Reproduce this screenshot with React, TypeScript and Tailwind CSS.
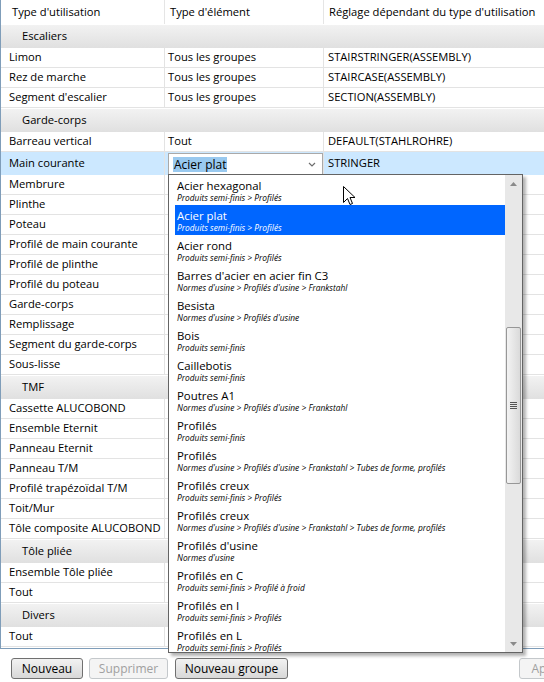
import React from "react";

type Row = { a: string; b?: string; c?: string; combo?: boolean };
type Group = { title: string; rows: Row[] };

const groups: Group[] = [
  {
    title: "Escaliers",
    rows: [
      { a: "Limon", b: "Tous les groupes", c: "STAIRSTRINGER(ASSEMBLY)" },
      { a: "Rez de marche", b: "Tous les groupes", c: "STAIRCASE(ASSEMBLY)" },
      { a: "Segment d'escalier", b: "Tous les groupes", c: "SECTION(ASSEMBLY)" },
    ],
  },
  {
    title: "Garde-corps",
    rows: [
      { a: "Barreau vertical", b: "Tout", c: "DEFAULT(STAHLROHRE)" },
      { a: "Main courante", b: "Acier plat", c: "STRINGER", combo: true },
      { a: "Membrure" },
      { a: "Plinthe" },
      { a: "Poteau" },
      { a: "Profilé de main courante" },
      { a: "Profilé de plinthe" },
      { a: "Profilé du poteau" },
      { a: "Garde-corps" },
      { a: "Remplissage" },
      { a: "Segment du garde-corps" },
      { a: "Sous-lisse" },
    ],
  },
  {
    title: "TMF",
    rows: [
      { a: "Cassette ALUCOBOND" },
      { a: "Ensemble Eternit" },
      { a: "Panneau Eternit" },
      { a: "Panneau T/M" },
      { a: "Profilé trapézoïdal T/M" },
      { a: "Toit/Mur" },
      { a: "Tôle composite ALUCOBOND" },
    ],
  },
  { title: "Tôle pliée", rows: [{ a: "Ensemble Tôle pliée" }, { a: "Tout" }] },
  { title: "Divers", rows: [{ a: "Tout" }] },
];

const SF = "Produits semi-finis > Profilés";
const items: [string, string][] = [
  ["Acier hexagonal", SF],
  ["Acier plat", SF],
  ["Acier rond", SF],
  ["Barres d'acier en acier fin C3", "Normes d'usine > Profilés d'usine > Frankstahl"],
  ["Besista", "Normes d'usine > Profilés d'usine"],
  ["Bois", "Produits semi-finis"],
  ["Caillebotis", "Produits semi-finis"],
  ["Poutres A1", "Normes d'usine > Profilés d'usine > Frankstahl"],
  ["Profilés", "Produits semi-finis"],
  ["Profilés", "Normes d'usine > Profilés d'usine > Frankstahl > Tubes de forme, profilés"],
  ["Profilés creux", SF],
  ["Profilés creux", "Normes d'usine > Profilés d'usine > Frankstahl > Tubes de forme, profilés"],
  ["Profilés d'usine", "Normes d'usine"],
  ["Profilés en C", "Produits semi-finis > Profilé à froid"],
  ["Profilés en I", SF],
  ["Profilés en L", SF],
];

function Button({ label, disabled, w }: { label: string; disabled?: boolean; w: string }) {
  return (
    <div
      className={
        "flex h-[21px] shrink-0 items-center justify-center overflow-hidden rounded-[3px] border text-[12px] " +
        w +
        (disabled
          ? " border-[#c4c8cb] bg-[#f4f4f4] text-[#a0a0a0]"
          : " border-[#707070] bg-gradient-to-b from-[#f2f2f2] to-[#d8d8d8] text-black")
      }
    >
      {label}
    </div>
  );
}

function Dropdown() {
  return (
    <div className="absolute left-[168px] top-[174px] flex h-[479px] w-[355px] border border-[#646464] bg-white shadow-[3px_3px_3px_rgba(0,0,0,0.3)]">
      <div className="flex-1 overflow-hidden">
        {items.map(([t, s], i) => {
          const sel = i === 1;
          return (
            <div
              key={i}
              className={
                "ml-[6px] flex h-[30px] flex-col pl-[2px] leading-none " +
                (sel ? "bg-[#0066ff] text-white" : "text-black")
              }
            >
              <span className="mt-[3px] text-[11.4px] leading-[15px]">{t}</span>
              <span className="text-[8.4px] italic leading-[10px]">{s}</span>
            </div>
          );
        })}
      </div>
      {/* scrollbar */}
      <div className="flex w-[17px] flex-col bg-[#e8e8e8]">
        <div className="flex h-[17px] items-center justify-center">
          <svg width="7" height="4" viewBox="0 0 7 4">
            <path d="M0 4 L3.5 0 L7 4 Z" fill="#8a8a8a" />
          </svg>
        </div>
        <div className="flex-1">
          <div className="mx-[1px] mt-[135px] flex h-[157px] items-center justify-center rounded-[2px] border border-[#979797] bg-gradient-to-r from-[#f3f3f3] to-[#dadada]">
            <div className="flex w-[7px] flex-col gap-[1px]">
              <div className="h-px bg-[#555]" />
              <div className="h-px bg-[#555]" />
              <div className="h-px bg-[#555]" />
              <div className="h-px bg-[#555]" />
            </div>
          </div>
        </div>
        <div className="flex h-[17px] items-center justify-center">
          <svg width="7" height="4" viewBox="0 0 7 4">
            <path d="M0 0 L3.5 4 L7 0 Z" fill="#8a8a8a" />
          </svg>
        </div>
      </div>
    </div>
  );
}

export default function App() {
  return (
    <div className="relative h-[682px] w-[544px] overflow-hidden bg-white font-['Open_Sans',sans-serif] text-[11.2px] text-black">
      <div className="h-[649px] border-b border-l border-[#7f9db9]">
        {/* header */}
        <div className="grid h-[24px] grid-cols-[164px_159px_1fr] items-center">
          <div className="h-full border-r border-[#e5e5e5] pl-[11px] leading-[24px]">Type d'utilisation</div>
          <div className="h-full border-r border-[#e5e5e5] pl-[5px] leading-[24px]">Type d'élément</div>
          <div className="h-full pl-[5px] leading-[24px]">Réglage dépendant du type d'utilisation</div>
        </div>
        {groups.map((g) => (
          <div key={g.title}>
            <div className="flex h-[24px] items-center border-t border-white bg-gradient-to-b from-[#f2f2f2] to-[#e0e0e0] pl-[21px]">
              {g.title}
            </div>
            {g.rows.map((r, i) => (
              <div
                key={i}
                className={
                  "grid grid-cols-[164px_159px_1fr] border-b " +
                  (r.combo ? "h-[23px] border-[#cce8ff] bg-[#cce8ff]" : "h-[20px] border-[#e3e3e3]")
                }
              >
                <div className="flex items-center overflow-hidden whitespace-nowrap border-r border-[#e3e3e3] pl-[8px]">
                  {r.a}
                </div>
                <div className="flex items-center border-r border-[#e3e3e3] pl-[3px]">
                  {r.combo ? (
                    <div className="mt-[1px] flex h-[22px] w-[155px] items-center justify-between border border-b-0 border-[#a9a9a9] bg-white pl-[4px] pr-[6px]">
                      <span className="bg-[#99c9ef] px-[1px] text-[12px] leading-[15px]">{r.b}</span>
                      <svg width="8" height="5" viewBox="0 0 8 5">
                        <path d="M1 1 L4 4 L7 1" stroke="#6d6d6d" strokeWidth="1.2" fill="none" />
                      </svg>
                    </div>
                  ) : (
                    r.b
                  )}
                </div>
                <div className="flex items-center pl-[4px]">{r.c}</div>
              </div>
            ))}
          </div>
        ))}
      </div>

      {/* buttons */}
      <div className="mt-[9px] flex pl-[11px]">
        <Button label="Nouveau" w="w-[72px]" />
        <div className="ml-[6px]">
          <Button label="Supprimer" disabled w="w-[79px]" />
        </div>
        <div className="ml-[7px]">
          <Button label="Nouveau groupe" w="w-[113px]" />
        </div>
        <div className="ml-[231px]">
          <Button label="Ap" disabled w="w-[40px]" />
        </div>
      </div>

      <Dropdown />

      {/* mouse cursor */}
      <svg className="absolute left-[343px] top-[186px]" width="13" height="20" viewBox="0 0 13 20">
        <path
          d="M0.5 0.5 L0.5 16.5 L4.5 12.5 L7 18.5 L9.5 17.5 L7 11.5 L12 11.5 Z"
          fill="white"
          stroke="black"
          strokeWidth="1"
          strokeLinejoin="miter"
        />
      </svg>
    </div>
  );
}
